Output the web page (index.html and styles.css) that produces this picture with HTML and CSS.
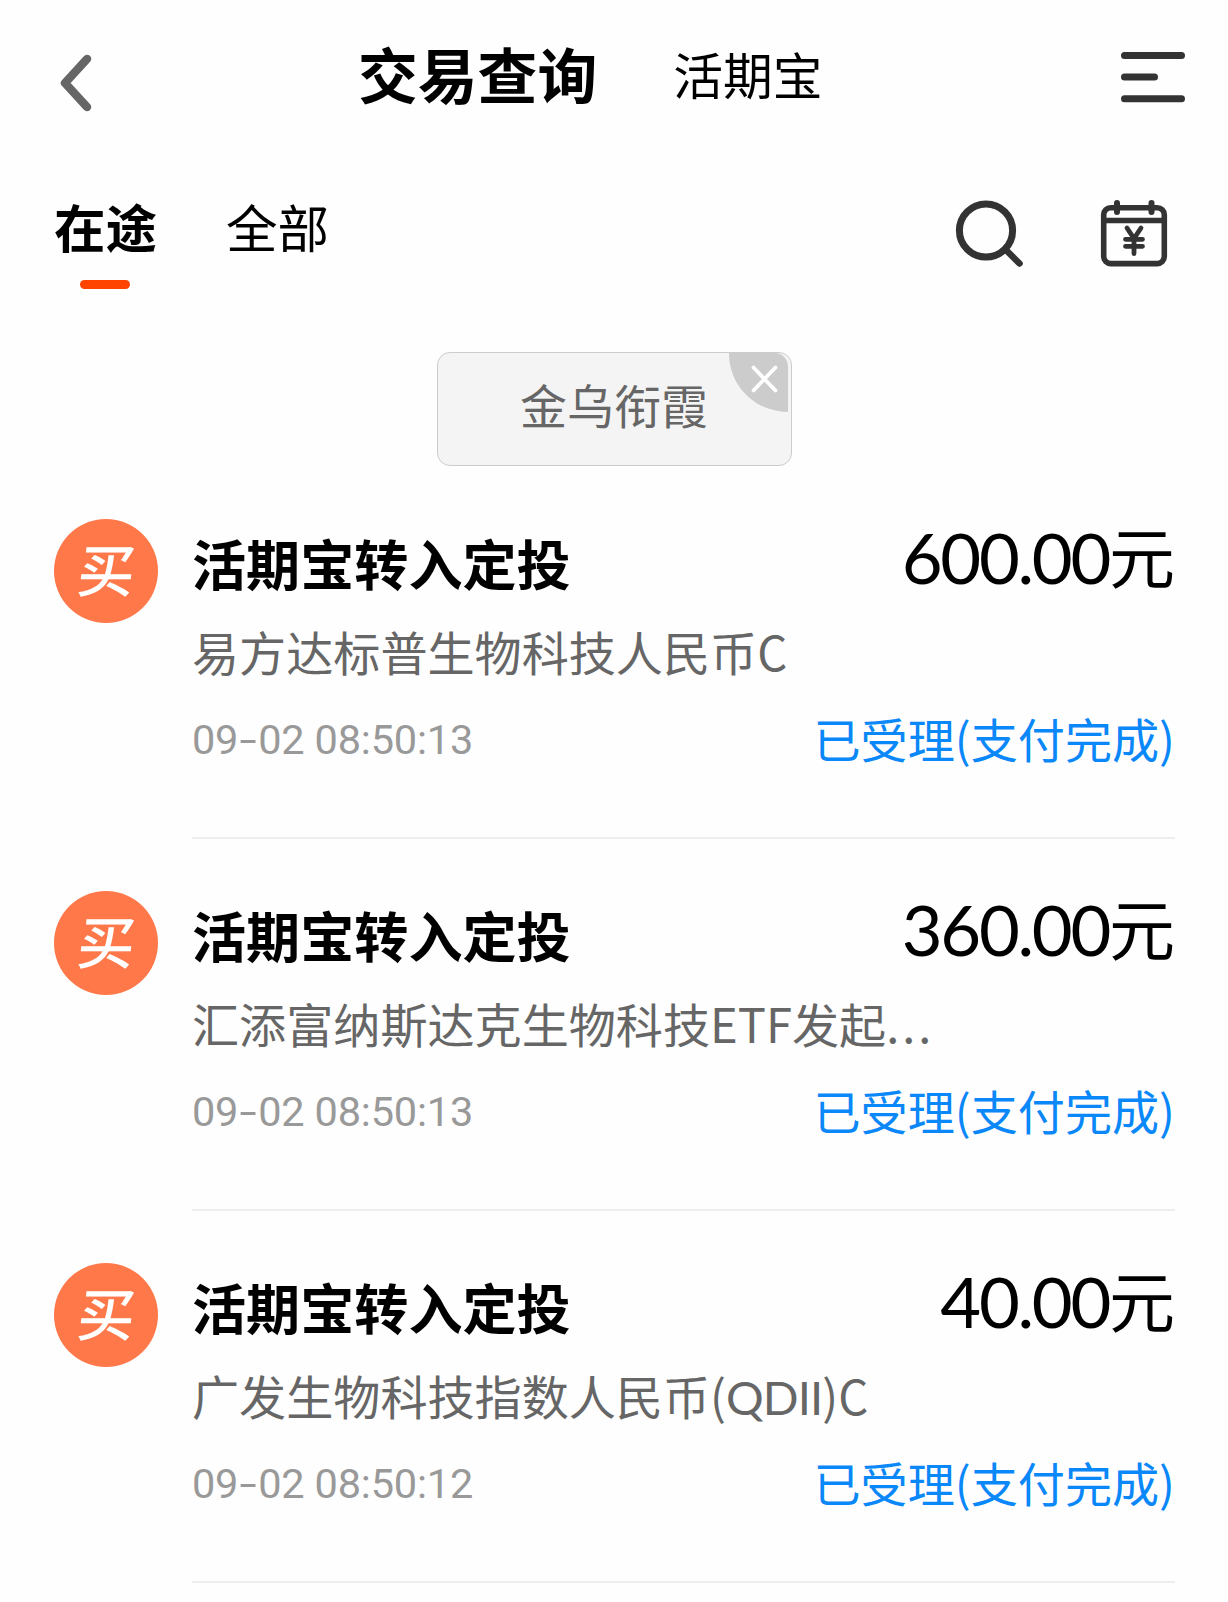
FILE: index.html
```html
<!DOCTYPE html>
<html lang="zh-CN">
<head>
<meta charset="utf-8">
<title>交易查询</title>
<link rel="stylesheet" href="styles.css">
</head>
<body>
<header class="header">
  <svg class="back" width="36" height="60" viewBox="0 0 36 60"><path d="M31 6 9 30 31 54" fill="none" stroke="#666" stroke-width="8.5" stroke-linecap="round" stroke-linejoin="round"/></svg>
  <h1 class="title">交易查询</h1>
  <span class="subtitle">活期宝</span>
  <svg class="menu" width="64" height="52" viewBox="0 0 64 52"><path d="M3.5 4.5h57M3.5 26h30M3.5 47.8h57" fill="none" stroke="#333" stroke-width="7" stroke-linecap="round"/></svg>
</header>
<nav class="tabs">
  <span class="tab tab-active">在途</span>
  <span class="tab">全部</span>
  <svg class="search" width="70" height="70" viewBox="0 0 70 70"><g fill="none" stroke="#333"><circle cx="31" cy="30.5" r="26.6" stroke-width="7"/><path d="M51 50 64.5 63.5" stroke-width="6.5" stroke-linecap="round"/></g></svg>
  <svg class="calendar" width="68" height="68" viewBox="0 0 68 68"><g fill="none" stroke="#333" stroke-linejoin="round"><rect x="3.7" y="7.8" width="60.6" height="55.8" rx="7" stroke-width="5.6"/><path d="M4 20.5H64" stroke-width="5.4"/><path d="M17 3v9M51.5 3v9" stroke-width="6" stroke-linecap="round"/><path d="M27 28 34 38.5 41 28M34 38.5V53.5M25.5 39.3h17M25.5 46.3h17" stroke-width="4.8" stroke-linecap="round"/></g></svg>
</nav>
<div class="filter">
  <div class="chip">金乌衔霞
    <svg class="chip-close" width="61" height="60" viewBox="0 0 61 60"><path d="M1 0H47C54 0 60 6 60 14V59C28 59 1 34 1 0Z" fill="#ccc"/><path d="M25.5 14.5 47.5 37.5M47.5 14.5 25.5 37.5" stroke="#fff" stroke-width="3.8" stroke-linecap="round"/></svg>
  </div>
</div>
<main class="list">
  <article class="item">
    <div class="badge"><span class="badge-text">买</span></div>
    <div class="content">
      <div class="row"><h2 class="name">活期宝转入定投</h2><p class="amount">600.00<span class="unit">元</span></p></div>
      <p class="fund">易方达标普生物科技人民币C</p>
      <div class="row"><time class="time">09<span class="dash">-</span>02 08:50:13</time><span class="status">已受理(支付完成)</span></div>
    </div>
  </article>
  <article class="item">
    <div class="badge"><span class="badge-text">买</span></div>
    <div class="content">
      <div class="row"><h2 class="name">活期宝转入定投</h2><p class="amount">360.00<span class="unit">元</span></p></div>
      <p class="fund">汇添富纳斯达克生物科技ETF发起<span class="dots">...</span></p>
      <div class="row"><time class="time">09<span class="dash">-</span>02 08:50:13</time><span class="status">已受理(支付完成)</span></div>
    </div>
  </article>
  <article class="item">
    <div class="badge"><span class="badge-text">买</span></div>
    <div class="content">
      <div class="row"><h2 class="name">活期宝转入定投</h2><p class="amount">40.00<span class="unit">元</span></p></div>
      <p class="fund">广发生物科技指数人民币(<span class="latin">QDII</span>)C</p>
      <div class="row"><time class="time">09<span class="dash">-</span>02 08:50:12</time><span class="status">已受理(支付完成)</span></div>
    </div>
  </article>
</main>
</body>
</html>
```
FILE: styles.css
```css
* { box-sizing: border-box; }
body {
  margin: 0;
  background: #fefefe;
  color: #000;
  font-family: "Noto Sans CJK SC", "Noto Sans", sans-serif;
}
h1, h2, p { margin: 0; font-weight: 400; }
svg { display: block; flex: none; }

.header {
  display: flex;
  align-items: flex-start;
  height: 144px;
  padding: 0 42px 0 56px;
  white-space: nowrap;
}
.back { margin-top: 53px; }
.title {
  margin: 33px 0 0 266px;
  font-size: 59.8px;
  font-weight: 700;
  line-height: 80px;
}
.subtitle {
  margin: 33px 0 0 76px;
  font-size: 49.8px;
  line-height: 80px;
}
.menu { margin: 51px 1px 0 auto; }

.tabs {
  display: flex;
  align-items: flex-start;
  height: 208px;
  padding: 52px 60px 0 54px;
}
.tab {
  margin-right: 69px;
  font-size: 51.5px;
  line-height: 60px;
}
.tab-active { font-weight: 700; }
.tab-active::after {
  content: "";
  display: block;
  width: 50px;
  height: 9px;
  margin: 24px 0 0 26px;
  border-radius: 5px;
  background: #ff4400;
}
.search { margin: 4px 0 0 auto; }
.calendar { margin: 4px 0 0 75px; }

.filter { display: flex; justify-content: center; }
.chip {
  position: relative;
  width: 355px;
  height: 114px;
  border: 1.5px solid #ccc;
  border-radius: 13px;
  background: #f4f4f4;
  color: #666;
  font-size: 47px;
  line-height: 102px;
  text-align: center;
}
.chip-close { position: absolute; top: 0; right: 2px; }

.list { padding: 1px 53px 0 54px; }
.item { display: flex; gap: 34px; height: 372px; }
.badge {
  display: flex;
  justify-content: center;
  flex: none;
  width: 104px;
  height: 104px;
  margin-top: 52px;
  border-radius: 50%;
  background: #ff7849;
}
.badge-text {
  color: #fff;
  font-size: 57px;
  font-weight: 500;
  line-height: 97px;
  transform: skewX(-6deg);
}
.content {
  flex: 1;
  padding-top: 66px;
  border-bottom: 2px solid #eee;
  white-space: nowrap;
}
.row {
  display: flex;
  justify-content: space-between;
  height: 60px;
}
.name { font-size: 54.1px; font-weight: 700; line-height: 60px; }
.amount {
  font-family: Lato, "Noto Sans CJK SC", sans-serif;
  font-size: 70.5px;
  line-height: 45px;
  letter-spacing: -2.3px;
}
.unit {
  position: relative;
  top: -1px;
  font-family: "Noto Sans CJK SC", sans-serif;
  font-size: 66px;
  letter-spacing: 0;
}
.fund {
  height: 60px;
  margin: 28px 0 27px;
  color: #666;
  font-size: 47.1px;
  line-height: 60px;
}
.latin { font-family: Lato, sans-serif; line-height: 1; letter-spacing: -0.9px; }
.dots { letter-spacing: 2.9px; }
.time {
  color: #999;
  font-family: Roboto, sans-serif;
  font-size: 41.5px;
  line-height: 64px;
  letter-spacing: -0.2px;
}
.dash { display: inline-block; width: 20px; line-height: 1; text-align: center; transform: scaleX(1.5); }
.status { color: #0a87f8; font-size: 47.1px; line-height: 59px; }
```
